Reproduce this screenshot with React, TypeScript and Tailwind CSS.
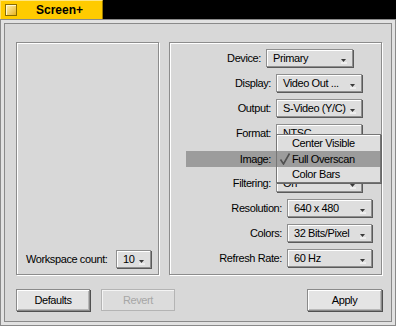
type Row = {
  label: string;
  value: string;
  cell: string;
  box: string;
  open?: boolean;
};

const rows: Row[] = [
  { label: "Device:", value: "Primary", cell: "w-[96px]", box: "w-[87px]" },
  { label: "Display:", value: "Video Out ...", cell: "w-[106px]", box: "w-[86px]" },
  { label: "Output:", value: "S-Video (Y/C)", cell: "w-[106px]", box: "w-[86px]" },
  { label: "Format:", value: "NTSC", cell: "w-[106px]", box: "w-[86px]" },
  { label: "Image:", value: "Full Overscan", cell: "w-[106px]", box: "w-[86px]", open: true },
  { label: "Filtering:", value: "On", cell: "w-[106px]", box: "w-[86px]" },
  { label: "Resolution:", value: "640 x 480", cell: "w-[117px]", box: "w-[85px]" },
  { label: "Colors:", value: "32 Bits/Pixel", cell: "w-[117px]", box: "w-[85px]" },
  { label: "Refresh Rate:", value: "60 Hz", cell: "w-[117px]", box: "w-[85px]" },
];

function Popup({ value, className }: { value: string; className: string }) {
  return (
    <div
      className={`flex h-[18px] items-center border border-[#8e8e8e] bg-[#dedede] pl-[6px] shadow-[inset_1px_1px_0_#fff,1px_1px_0_#5a5a5a] ${className}`}
    >
      <span className="flex-1 whitespace-nowrap">{value}</span>
      <svg width="6" height="5" className="mr-[5px] mb-[2px] self-end">
        <path d="M0 0h5L2.5 3z" fill="#3a3a3a" />
        <path d="M0 4h6" stroke="#fff" strokeWidth="1" />
      </svg>
    </div>
  );
}

function OpenMenu() {
  return (
    <div className="absolute left-0 top-[-15px] z-10 flex w-[105px] flex-col border border-[#767676] bg-[#dedede] shadow-[inset_1px_1px_0_#fff,1px_1px_0_#666]">
      <div className="flex h-[16px] items-center pl-[15px]">Center Visible</div>
      <div className="flex h-[16px] items-center bg-[#9c9c9c] pl-[2px]">
        <svg width="12" height="12" className="mr-[1px]">
          <path d="M1.5 6.5 L4.5 11 L10.5 0.5" stroke="#505050" strokeWidth="1.6" fill="none" />
        </svg>
        <span>Full Overscan</span>
      </div>
      <div className="flex h-[15px] items-center pl-[15px]">Color Bars</div>
    </div>
  );
}

function Button({ label, disabled, className }: { label: string; disabled?: boolean; className: string }) {
  return (
    <div
      className={
        disabled
          ? `flex h-[22px] items-center justify-center border border-[#b4b4b4] bg-[#dcdcdc] text-[#a6a6a6] shadow-[inset_1px_1px_0_#f4f4f4] ${className}`
          : `flex h-[22px] items-center justify-center border border-[#8a8a8a] bg-[#e4e4e4] shadow-[inset_1px_1px_0_#fff,inset_-1px_-1px_0_#b8b8b8,1px_1px_0_#505050] ${className}`
      }
    >
      {label}
    </div>
  );
}

export default function App() {
  return (
    <div className="flex h-[326px] w-[396px] flex-col bg-black font-['Liberation_Sans',Arial,sans-serif] text-[11px] tracking-[-0.4px] text-black">
      <div className="flex h-[19px]">
        <div className="flex w-[103px] items-center border-t border-l border-r border-t-[#ffe680] border-l-[#ffe066] border-r-[#9a7a00] bg-[#ffcb00]">
          <div className="ml-[4px] h-[12px] w-[12px] border border-[#8a6c00] bg-gradient-to-br from-[#fff2a8] to-[#e8b400] shadow-[inset_1px_1px_0_#fff8d0]" />
          <span className="ml-[19px] text-[12px] font-bold tracking-normal">Screen+</span>
        </div>
      </div>

      <div className="flex flex-1 border border-[#8a8a8a] bg-[#e2e2e2] p-[3px]">
        <div className="flex flex-1 flex-col border border-[#8a8a8a] bg-[#d8d8d8] pt-[18px] pr-[9px] pb-[10px] pl-[11px]">
          <div className="flex h-[233px] gap-[10px]">
            <div className="flex w-[143px] flex-col justify-end border border-[#8c8c8c] pb-[6px] pl-[9px] shadow-[inset_1px_1px_0_#fff,1px_1px_0_#fff]">
              <div className="flex items-center">
                <span className="w-[90px] whitespace-nowrap">Workspace count:</span>
                <Popup value="10" className="w-[35px]" />
              </div>
            </div>

            <div className="flex w-[213px] flex-col gap-[7px] border border-[#8c8c8c] pt-[6px] shadow-[inset_1px_1px_0_#fff,1px_1px_0_#fff]">
              {rows.map((r) => (
                <div key={r.label} className="flex h-[18px] items-center">
                  <div className={`flex h-full justify-end ${r.cell}`}>
                    {r.open ? (
                      <span className="mt-[2px] flex h-[16px] w-[90px] items-center justify-end bg-[#9c9c9c] pr-[5px]">
                        {r.label}
                      </span>
                    ) : (
                      <span className="flex items-center whitespace-nowrap pr-[5px]">{r.label}</span>
                    )}
                  </div>
                  <div className="relative">
                    <Popup value={r.value} className={r.box} />
                    {r.open && <OpenMenu />}
                  </div>
                </div>
              ))}
            </div>
          </div>

          <div className="mt-[14px] flex">
            <Button label="Defaults" className="w-[74px]" />
            <Button label="Revert" disabled className="ml-[11px] w-[74px]" />
            <Button label="Apply" className="ml-auto w-[75px]" />
          </div>
        </div>
      </div>
    </div>
  );
}
